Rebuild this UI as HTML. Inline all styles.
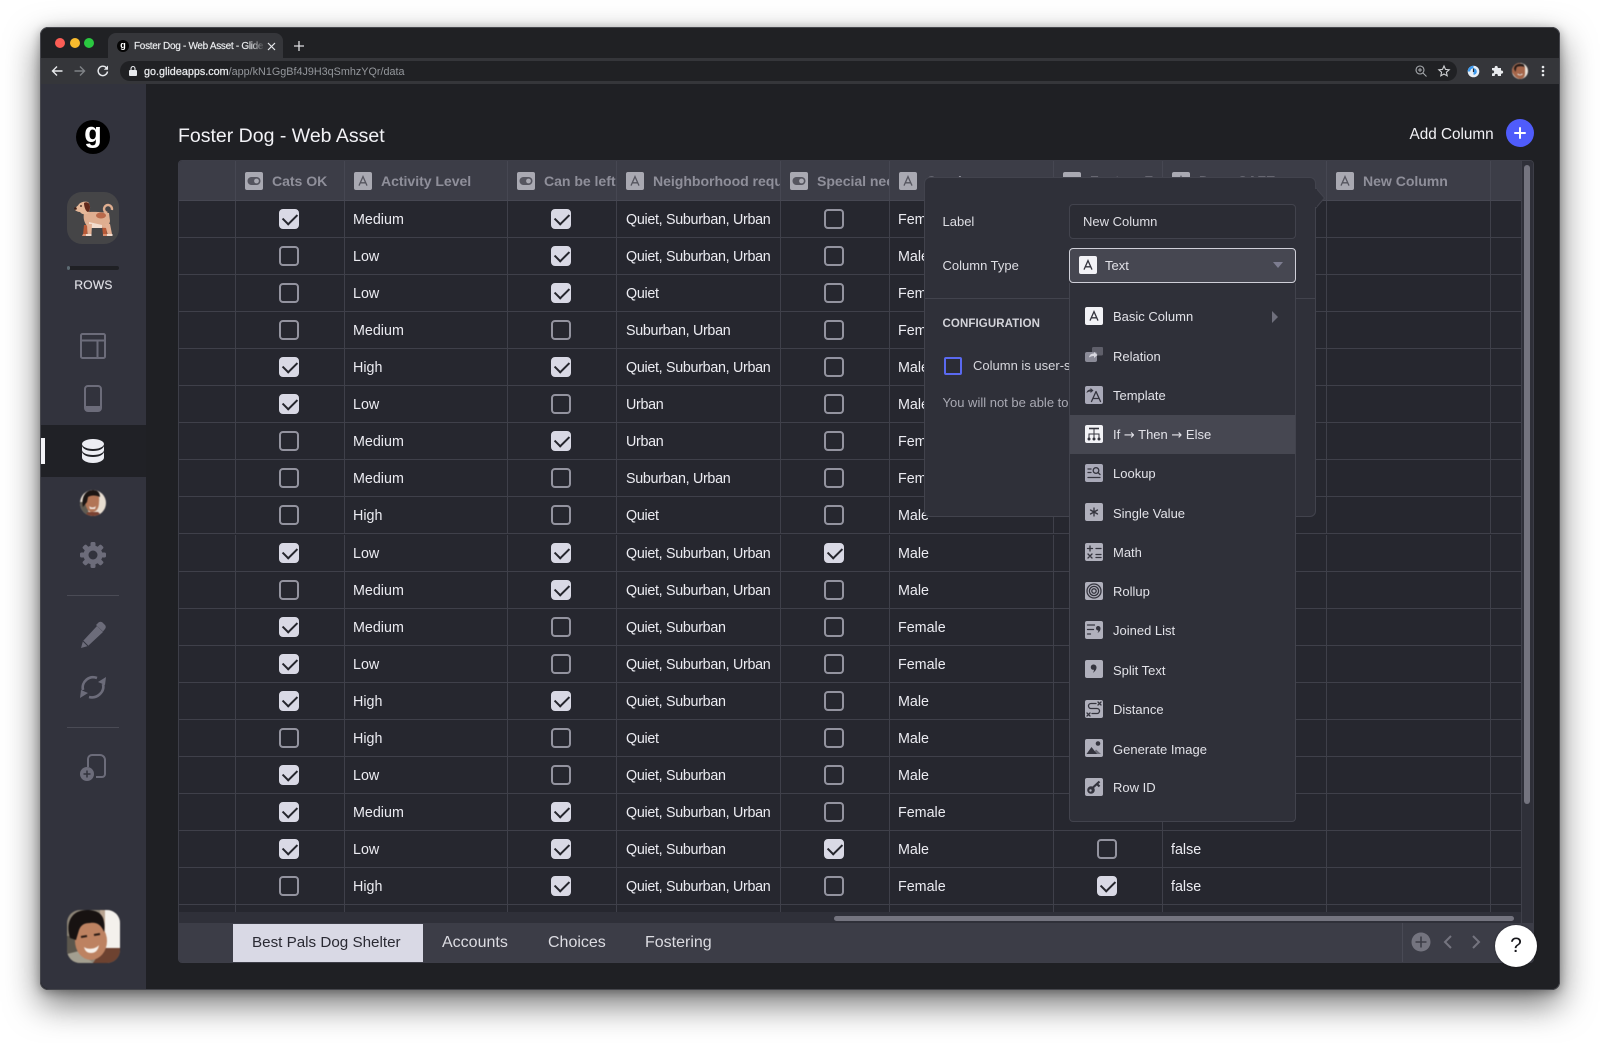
<!DOCTYPE html>
<html lang="en"><head><meta charset="utf-8"><title>Foster Dog - Web Asset</title>
<style>
*{box-sizing:border-box}
html,body{margin:0;padding:0;width:1600px;height:1043px;overflow:hidden;background:#fff;font-family:"Liberation Sans",sans-serif}
.a{position:absolute}
.t{position:absolute;white-space:nowrap;line-height:20px;height:20px}
#win{position:absolute;left:40px;top:27px;width:1520px;height:963px;background:#1f2024;border-radius:8px;box-shadow:0 14px 34px rgba(0,0,0,.55),0 2px 10px rgba(0,0,0,.3);}
#stage{position:absolute;left:0;top:0;width:1600px;height:1043px;overflow:hidden}
#clip{position:absolute;left:40px;top:27px;width:1520px;height:963px;border-radius:8px;overflow:hidden;border:1px solid #45464c}
#tbl{position:absolute;left:178px;top:160px;width:1356px;height:803px;border:1px solid #3d3e48;border-radius:4px;background:#26272f;overflow:hidden}
.r{position:absolute;left:0;width:1343px;height:37px;display:grid;grid-template-columns:57px 109px 163px 109px 164px 109px 164px 109px 164px 164px 31px;border-bottom:1px solid #3f404a;color:#ececf2;font-size:14.3px;line-height:38px}
.r span{border-right:1px solid #3f404a;padding-left:8px;white-space:nowrap;overflow:hidden;display:block;height:36px}
.r span:nth-child(5){letter-spacing:-.3px;padding-left:9px}
.r span.m{padding:8px 0 0 0;display:flex;justify-content:center}
.c{display:block;width:20px;height:20px;border:2px solid #93939f;border-radius:4px;position:relative;margin-right:3px}
.k{background:#d9d9e5;border-color:#d9d9e5}
.k:after{content:"";position:absolute;left:2px;top:2px;width:12px;height:7px;border-left:2px solid #24252c;border-bottom:2px solid #24252c;transform:rotate(-45deg)}
.h{position:absolute;left:0;top:0;width:1343px;height:40px;display:grid;grid-template-columns:57px 109px 163px 109px 164px 109px 164px 109px 164px 164px 31px;background:#3c3d47;border-bottom:1px solid #464752;color:#8f8f9a;font-size:14.1px;font-weight:bold;line-height:41px}
.h span{border-right:1px solid #464752;position:relative;overflow:hidden;display:block;height:39px;padding-left:36px;white-space:nowrap;letter-spacing:-.05px}
.h svg{position:absolute;left:9px;top:11px}
svg{display:block;overflow:visible}
.mi{position:absolute;left:1085px;width:18px;height:18px}
.ml{position:absolute;left:1113px;font-size:13px;color:#e2e2e8;white-space:nowrap;line-height:20px}
.g{fill:none;stroke:#34343e;stroke-width:1.3;stroke-linecap:round;stroke-linejoin:round}
.f{fill:#34343e}
.tb{position:absolute;top:933px;font-size:16px;line-height:20px;color:#dcdce2;white-space:nowrap}
</style></head><body>
<svg width="0" height="0" style="position:absolute">
<symbol id="iA" viewBox="0 0 18 18"><rect width="18" height="18" rx="2" fill="#a9a9b2"/><path d="M5 13.600 9 4.600l4 9M6.400 10.800h5.200" fill="none" stroke="#55555f" stroke-width="1.300"/></symbol>
<symbol id="iT" viewBox="0 0 18 18"><rect width="18" height="18" rx="2" fill="#a9a9b2"/><rect x="2.500" y="5" width="13" height="8" rx="4" fill="#55555f"/><circle cx="11.500" cy="9" r="2.400" fill="#a9a9b2"/></symbol>
<symbol id="iW" viewBox="0 0 18 18"><rect width="18" height="18" rx="2" fill="#f2f2f6"/><path d="M5 13.600 9 4.600l4 9M6.400 10.800h5.200" fill="none" stroke="#34343e" stroke-width="1.300"/></symbol>
</svg>
<div id="stage">
<div id="win"></div>
<div id="clip"></div>

<!-- chrome -->
<div class="a" style="left:41px;top:28px;width:1518px;height:31px;background:#202124;border-radius:8px 8px 0 0"></div>
<div class="a" style="left:41px;top:58px;width:1518px;height:26px;background:#35363a"></div>
<div class="a" style="left:55px;top:38px;width:10px;height:10px;border-radius:50%;background:#fb5d55"></div>
<div class="a" style="left:70px;top:38px;width:10px;height:10px;border-radius:50%;background:#f9bb2e"></div>
<div class="a" style="left:84px;top:38px;width:10px;height:10px;border-radius:50%;background:#2ac840"></div>
<div class="a" style="left:108px;top:33px;width:175px;height:26px;background:#35363a;border-radius:8px 8px 0 0"></div>
<div class="a" style="left:117px;top:40px;width:12px;height:12px;border-radius:50%;background:#050505;color:#fff;font-size:9px;font-weight:bold;line-height:10px;text-align:center">g</div>
<div class="t" style="left:134px;top:36.500px;width:130px;overflow:hidden;font-size:10px;letter-spacing:-.3px;color:#eceef0;-webkit-text-stroke:.15px #eceef0">Foster Dog - Web Asset - Glide</div>
<div class="a" style="left:250px;top:36px;width:15px;height:20px;background:linear-gradient(90deg,rgba(53,54,58,0),#35363a)"></div>
<svg class="a" style="left:267px;top:41.500px" width="9" height="9"><path d="M1 1l7 7M8 1l-7 7" stroke="#e8eaed" stroke-width="1.200"/></svg>
<svg class="a" style="left:294px;top:41px" width="10" height="10"><path d="M5 0v10M0 5h10" stroke="#dcdde0" stroke-width="1.300"/></svg>
<svg class="a" style="left:51px;top:65px" width="12" height="12"><path d="M11.500 6H1.500M6 1.500 1.500 6 6 10.500" fill="none" stroke="#e8eaed" stroke-width="1.400"/></svg>
<svg class="a" style="left:74px;top:65px" width="12" height="12"><path d="M.5 6h10M6 1.500 10.500 6 6 10.500" fill="none" stroke="#7f8286" stroke-width="1.400"/></svg>
<svg class="a" style="left:97px;top:65px" width="12" height="12"><path d="M10.500 6.500A4.700 4.700 0 1 1 9.200 2.600" fill="none" stroke="#e8eaed" stroke-width="1.400"/><path d="M11 .5v4.200H6.800z" fill="#e8eaed"/></svg>
<div class="a" style="left:120px;top:61px;width:1337px;height:20px;background:#202124;border-radius:10px"></div>
<svg class="a" style="left:129px;top:66px" width="8" height="10"><rect y="4" width="8" height="6" rx="1" fill="#e8eaed"/><path d="M2 4V2.500a2 2 0 0 1 4 0V4" fill="none" stroke="#e8eaed" stroke-width="1.100"/></svg>
<div class="t" style="left:144px;top:62px;font-size:10.800px;color:#e8eaed"><b style="font-weight:normal;-webkit-text-stroke:.25px #e8eaed">go.glideapps.com</b><span style="color:#94979c">/app/kN1GgBf4J9H3qSmhzYQr/data</span></div>
<svg class="a" style="left:1415px;top:65px" width="12" height="12"><circle cx="5" cy="5" r="4" fill="none" stroke="#a8abaf" stroke-width="1.100"/><path d="M8 8l3.500 3.500M3 5h4M5 3v4" stroke="#a8abaf" stroke-width="1"/></svg>
<svg class="a" style="left:1438px;top:65px" width="12" height="12"><path d="M6 1l1.500 3.400 3.700.4-2.800 2.400.8 3.600L6 9l-3.200 1.800.8-3.600L.8 4.800l3.700-.4z" fill="none" stroke="#cfd1d4" stroke-width="1.100"/></svg>
<svg class="a" style="left:1467px;top:65px" width="13" height="13"><circle cx="6.500" cy="6.500" r="5.800" fill="#e8eef5"/><path d="M6.500.7a5.800 5.800 0 0 0-5.800 5.800h2.500a3.300 3.300 0 1 1 3.300 3.300z" fill="#3d9bf0"/><path d="M6.500 3.500v3.500" stroke="#20242a" stroke-width="1.200"/></svg>
<svg class="a" style="left:1491px;top:65px" width="12" height="12"><path d="M1 3h2.700a1.600 1.600 0 1 1 3 0H10v2.600a1.600 1.600 0 1 1 0 3V11H6.800a1.600 1.600 0 1 0-3 0H1V8.300a1.600 1.600 0 1 0 0-3z" fill="#e8eaed"/></svg>
<svg class="a" style="left:1512px;top:63px;filter:blur(.4px)" width="16" height="16"><circle cx="8" cy="8" r="8" fill="#e9e2da"/><path d="M8 0a8 8 0 0 0-7.800 9.500C2 12 3 15 8 16c4-.4 5-3 5-6V4z" fill="#a5664a"/><path d="M2 6C2 2 6 .5 10 .8c2 .4 2.500 2 2.500 3.200-3-1-7-1-8 .5L3.500 9z" fill="#241a17"/><path d="M5.500 11c1.500 1 3.500 1 5 0" stroke="#f4ece6" stroke-width="1"/></svg>
<svg class="a" style="left:1541px;top:65px" width="4" height="12"><circle cx="2" cy="2" r="1.300" fill="#e8eaed"/><circle cx="2" cy="6" r="1.300" fill="#e8eaed"/><circle cx="2" cy="10" r="1.300" fill="#e8eaed"/></svg>

<!-- sidebar -->
<div class="a" style="left:41px;top:84px;width:105px;height:905px;background:#32333d;border-radius:0 0 0 8px"></div>
<div class="a" style="left:76px;top:120px;width:34px;height:34px;border-radius:50%;background:#000;color:#fff;font-size:29px;font-weight:bold;text-align:center;line-height:27px">g</div>
<div class="a" style="left:67px;top:192px;width:52px;height:52px;border-radius:15px;background:#454547"></div>
<svg class="a" style="left:72px;top:197px" width="42" height="42" viewBox="0 0 42 42">
<circle cx="36" cy="12" r="4" fill="none" stroke="#dfae90" stroke-width="2.400" stroke-dasharray="19 7" transform="rotate(100 36 12)"/>
<path d="M12 28h4l-1 10h-4z" fill="#b85a38"/>
<path d="M30 28h4l1 10h-4z" fill="#b85a38"/>
<path d="M11 37h4v2h-5zM31 37h4v2h-4z" fill="#d98f70"/>
<path d="M12 16C18 14 30 15 37 16l1 8c-.5 3-2 5-3 7L16 30c-4-4-5-9-4-14z" fill="#dfae90"/>
<ellipse cx="29" cy="18.500" rx="5" ry="3" fill="#b9694a"/>
<path d="M17 25l13 3v3H17z" fill="#f3dccd"/>
<path d="M15 27h5l-.5 10h-4z" fill="#e3b093"/>
<path d="M33 27h5l2 10h-4.500z" fill="#e3b093"/>
<path d="M14 37h5.500v2H14zM35 37h5.500v2H35z" fill="#f3dccd"/>
<path d="M3 11c1-1 3-2 4-4 2-2 6-3 9-2 2 2 3 6 1 10-2 3-7 3-9 0-2 0-4-1-5-2-.5-.7-.5-1.300 0-2z" fill="#e6b899"/>
<path d="M12 6c3-2 6 0 6 4 0 3-1 5-2 5-2 0-4-5-4-9z" fill="#61291c"/>
<circle cx="3.500" cy="11.500" r="1.300" fill="#3a1c14"/><circle cx="9" cy="9" r=".9" fill="#2a1410"/>
</svg>
<div class="a" style="left:67px;top:266px;width:52px;height:4px;border-radius:2px;background:#1f2024"></div>
<div class="a" style="left:67px;top:266px;width:3px;height:4px;border-radius:2px;background:#5c6a72"></div>
<div class="t" style="left:41px;top:275px;width:105px;text-align:center;font-size:12px;color:#dedee4;letter-spacing:.2px;-webkit-text-stroke:.2px #dedee4">ROWS</div>
<svg class="a" style="left:80px;top:333px" width="26" height="26"><rect x="1" y="1" width="24" height="24" rx="1.500" fill="none" stroke="#6c6c7a" stroke-width="2"/><path d="M1 7.500h24M17.500 7.500V25" stroke="#6c6c7a" stroke-width="2"/></svg>
<svg class="a" style="left:84px;top:385px" width="18" height="27"><rect x="1" y="1" width="16" height="25" rx="3" fill="none" stroke="#6c6c7a" stroke-width="2"/><path d="M1 21h16v2.500a2.500 2.500 0 0 1-2.500 2.500h-11A2.500 2.500 0 0 1 1 23.500z" fill="#6c6c7a"/></svg>
<div class="a" style="left:41px;top:425px;width:105px;height:52px;background:#202126"></div>
<div class="a" style="left:41px;top:438px;width:4px;height:26px;background:#f4f4f8"></div>
<svg class="a" style="left:82px;top:439px" width="22" height="24"><ellipse cx="11" cy="5" rx="11" ry="5" fill="#ecedf3"/><path d="M0 7c1 3 5 5 11 5s10-2 11-5v4c0 3-5 5-11 5S0 14 0 11z" fill="#ecedf3"/><path d="M0 13c1 3 5 5 11 5s10-2 11-5v5.500c0 3-5 5.500-11 5.500S0 21.500 0 18.500z" fill="#ecedf3"/></svg>
<svg class="a" style="left:80px;top:490px;filter:blur(.4px)" width="26" height="26" viewBox="0 0 26 26"><defs><clipPath id="av1"><circle cx="13" cy="13" r="13"/></clipPath></defs><g clip-path="url(#av1)"><rect width="26" height="26" fill="#e8ded2"/><path d="M0 12h7l2 14H0z" fill="#5f5a50"/><path d="M5 10c0-6 4-8 8-8s7 3 6 10c0 7-3 10-7 10s-7-5-7-12z" fill="#b27556"/><path d="M3 17C1 8 5 0 13 0c5 0 7 3 7 7-4-2-9-2-12 0L7 12z" fill="#1b1513"/><path d="M9 16c2 2 5 2 7 0l-1 3h-5z" fill="#f5ede8"/><path d="M4 26l4-4h10l4 4z" fill="#7a4232"/></g></svg>
<svg class="a" style="left:80px;top:542px" width="26" height="26" viewBox="0 0 26 26"><g fill="#6c6c7a"><rect x="10.500" y="0" width="5" height="26" rx="1.500"/><rect x="10.500" y="0" width="5" height="26" rx="1.500" transform="rotate(45 13 13)"/><rect x="10.500" y="0" width="5" height="26" rx="1.500" transform="rotate(90 13 13)"/><rect x="10.500" y="0" width="5" height="26" rx="1.500" transform="rotate(135 13 13)"/><circle cx="13" cy="13" r="9.500"/></g><circle cx="13" cy="13" r="4.500" fill="#32333d"/></svg>
<div class="a" style="left:67px;top:595px;width:52px;height:1px;background:#4a4b55"></div>
<svg class="a" style="left:80px;top:622px" width="26" height="27" viewBox="0 0 26 27"><path d="M1 26l2-7L17 4l6 6L8 24z" fill="#6c6c7a"/><path d="M16 3l2.500-2.500a3 3 0 0 1 4 0l2.500 2.500a3 3 0 0 1 0 4L23 9.500z" fill="#6c6c7a"/><path d="M3 19l5 5" stroke="#32333d" stroke-width="1"/></svg>
<svg class="a" style="left:80px;top:675px" width="26" height="25" viewBox="0 0 26 25"><path d="M3 15C1 7 9 0 17 3M23 9c2 8-6 15-14 13" fill="none" stroke="#6c6c7a" stroke-width="2.600"/><path d="M26 2l-1 8-7-3zM0 23l1-8 7 3z" fill="#6c6c7a"/></svg>
<div class="a" style="left:67px;top:727px;width:52px;height:1px;background:#4a4b55"></div>
<svg class="a" style="left:80px;top:754px" width="27" height="27" viewBox="0 0 27 27"><path d="M8 13V5a4 4 0 0 1 4-4h8a5 5 0 0 1 5 5v14a3 3 0 0 1-3 3h-6" fill="none" stroke="#6c6c7a" stroke-width="2"/><circle cx="7" cy="20" r="7" fill="#6c6c7a"/><path d="M7 16.500v7M3.500 20h7" stroke="#32333d" stroke-width="1.500"/></svg>
<svg class="a" style="left:67px;top:910px;filter:blur(.6px)" width="53" height="53" viewBox="0 0 53 53"><defs><clipPath id="av2"><rect width="53" height="53" rx="13"/></clipPath></defs><g clip-path="url(#av2)"><rect width="53" height="53" fill="#8d8577"/><rect x="36" y="0" width="17" height="38" fill="#f4f1ec"/><rect x="33" y="0" width="5" height="40" fill="#b8a390"/><path d="M0 26h10l8 27H0z" fill="#5c574d"/><path d="M0 44l12-3 14 12H0z" fill="#a39f90"/><path d="M36 38h17v15H26z" fill="#6d4230"/><ellipse cx="24" cy="31" rx="16" ry="19" fill="#bd8261"/><path d="M3 28C-2 12 5 0 20 0c9 0 16 3 17 12 1 5 0 10 0 10-3-8-8-10-14-9-6 0-9 2-11 7L9 30z" fill="#171211"/><path d="M14 27l6-1M27 25l6-1" stroke="#2a1a14" stroke-width="2"/><path d="M17 37c4 3 12 2 15-2-1 6-4 8-8 8s-6-2-7-6z" fill="#f7f0ea"/></g></svg>

<!-- title -->
<div class="t" style="left:178px;top:124px;font-size:19.500px;color:#f2f2f6;line-height:24px;height:24px">Foster Dog - Web Asset</div>
<div class="t" style="left:1409.500px;top:124.500px;font-size:15.300px;color:#f2f2f6">Add Column</div>
<div class="a" style="left:1506px;top:119px;width:28px;height:28px;border-radius:50%;background:#4f5cfb"></div>
<svg class="a" style="left:1514px;top:127px" width="12" height="12"><path d="M6 1v10M1 6h10" stroke="#fff" stroke-width="2" stroke-linecap="round"/></svg>

<!-- table -->
<div id="tbl">
<div class="h">
<span></span>
<span><svg width="18" height="18"><use href="#iT"/></svg>Cats OK</span>
<span><svg width="18" height="18"><use href="#iA"/></svg>Activity Level</span>
<span><svg width="18" height="18"><use href="#iT"/></svg>Can be left alone</span>
<span><svg width="18" height="18"><use href="#iA"/></svg>Neighborhood required</span>
<span><svg width="18" height="18"><use href="#iT"/></svg>Special needs</span>
<span><svg width="18" height="18"><use href="#iA"/></svg>Gender</span>
<span><svg width="18" height="18"><use href="#iT"/></svg>Fosters F</span>
<span><svg width="18" height="18"><use href="#iA"/></svg>Dogs SAFE</span>
<span><svg width="18" height="18"><use href="#iA"/></svg>New Column</span>
<span></span>
</div>
<div class="r" style="top:40px"><span></span><span class="m"><i class="c k"></i></span><span>Medium</span><span class="m"><i class="c k"></i></span><span>Quiet, Suburban, Urban</span><span class="m"><i class="c"></i></span><span>Female</span><span></span><span></span><span></span><span></span></div>
<div class="r" style="top:77px"><span></span><span class="m"><i class="c"></i></span><span>Low</span><span class="m"><i class="c k"></i></span><span>Quiet, Suburban, Urban</span><span class="m"><i class="c"></i></span><span>Male</span><span></span><span></span><span></span><span></span></div>
<div class="r" style="top:114px"><span></span><span class="m"><i class="c"></i></span><span>Low</span><span class="m"><i class="c k"></i></span><span>Quiet</span><span class="m"><i class="c"></i></span><span>Female</span><span></span><span></span><span></span><span></span></div>
<div class="r" style="top:151px"><span></span><span class="m"><i class="c"></i></span><span>Medium</span><span class="m"><i class="c"></i></span><span>Suburban, Urban</span><span class="m"><i class="c"></i></span><span>Female</span><span></span><span></span><span></span><span></span></div>
<div class="r" style="top:188px"><span></span><span class="m"><i class="c k"></i></span><span>High</span><span class="m"><i class="c k"></i></span><span>Quiet, Suburban, Urban</span><span class="m"><i class="c"></i></span><span>Male</span><span></span><span></span><span></span><span></span></div>
<div class="r" style="top:225px"><span></span><span class="m"><i class="c k"></i></span><span>Low</span><span class="m"><i class="c"></i></span><span>Urban</span><span class="m"><i class="c"></i></span><span>Male</span><span></span><span></span><span></span><span></span></div>
<div class="r" style="top:262px"><span></span><span class="m"><i class="c"></i></span><span>Medium</span><span class="m"><i class="c k"></i></span><span>Urban</span><span class="m"><i class="c"></i></span><span>Female</span><span></span><span></span><span></span><span></span></div>
<div class="r" style="top:299px"><span></span><span class="m"><i class="c"></i></span><span>Medium</span><span class="m"><i class="c"></i></span><span>Suburban, Urban</span><span class="m"><i class="c"></i></span><span>Female</span><span></span><span></span><span></span><span></span></div>
<div class="r" style="top:336px"><span></span><span class="m"><i class="c"></i></span><span>High</span><span class="m"><i class="c"></i></span><span>Quiet</span><span class="m"><i class="c"></i></span><span>Male</span><span></span><span></span><span></span><span></span></div>
<div class="r" style="top:374px"><span></span><span class="m"><i class="c k"></i></span><span>Low</span><span class="m"><i class="c k"></i></span><span>Quiet, Suburban, Urban</span><span class="m"><i class="c k"></i></span><span>Male</span><span></span><span></span><span></span><span></span></div>
<div class="r" style="top:411px"><span></span><span class="m"><i class="c"></i></span><span>Medium</span><span class="m"><i class="c k"></i></span><span>Quiet, Suburban, Urban</span><span class="m"><i class="c"></i></span><span>Male</span><span></span><span></span><span></span><span></span></div>
<div class="r" style="top:448px"><span></span><span class="m"><i class="c k"></i></span><span>Medium</span><span class="m"><i class="c"></i></span><span>Quiet, Suburban</span><span class="m"><i class="c"></i></span><span>Female</span><span></span><span></span><span></span><span></span></div>
<div class="r" style="top:485px"><span></span><span class="m"><i class="c k"></i></span><span>Low</span><span class="m"><i class="c"></i></span><span>Quiet, Suburban, Urban</span><span class="m"><i class="c"></i></span><span>Female</span><span></span><span></span><span></span><span></span></div>
<div class="r" style="top:522px"><span></span><span class="m"><i class="c k"></i></span><span>High</span><span class="m"><i class="c k"></i></span><span>Quiet, Suburban</span><span class="m"><i class="c"></i></span><span>Male</span><span></span><span></span><span></span><span></span></div>
<div class="r" style="top:559px"><span></span><span class="m"><i class="c"></i></span><span>High</span><span class="m"><i class="c"></i></span><span>Quiet</span><span class="m"><i class="c"></i></span><span>Male</span><span></span><span></span><span></span><span></span></div>
<div class="r" style="top:596px"><span></span><span class="m"><i class="c k"></i></span><span>Low</span><span class="m"><i class="c"></i></span><span>Quiet, Suburban</span><span class="m"><i class="c"></i></span><span>Male</span><span></span><span></span><span></span><span></span></div>
<div class="r" style="top:633px"><span></span><span class="m"><i class="c k"></i></span><span>Medium</span><span class="m"><i class="c k"></i></span><span>Quiet, Suburban, Urban</span><span class="m"><i class="c"></i></span><span>Female</span><span></span><span></span><span></span><span></span></div>
<div class="r" style="top:670px"><span></span><span class="m"><i class="c k"></i></span><span>Low</span><span class="m"><i class="c k"></i></span><span>Quiet, Suburban</span><span class="m"><i class="c k"></i></span><span>Male</span><span class="m"><i class="c"></i></span><span>false</span><span></span><span></span><span></span></div>
<div class="r" style="top:707px"><span></span><span class="m"><i class="c"></i></span><span>High</span><span class="m"><i class="c k"></i></span><span>Quiet, Suburban, Urban</span><span class="m"><i class="c"></i></span><span>Female</span><span class="m"><i class="c k"></i></span><span>false</span><span></span><span></span><span></span></div>
<div class="r" style="top:744px;height:8px;overflow:hidden"><span></span><span></span><span></span><span></span><span></span><span></span><span></span><span></span><span></span><span></span><span></span></div>
<!-- scroll band -->
<div class="a" style="left:0;top:751px;width:1354px;height:11px;background:#2f3039"></div>
<div class="a" style="left:1342px;top:0;width:12px;height:762px;background:#2f3039;border-left:1px solid #3f404a"></div>
<div class="a" style="left:1345px;top:4px;width:6px;height:639px;border-radius:3px;background:#74747f"></div>
<div class="a" style="left:655px;top:755px;width:680px;height:5px;border-radius:3px;background:#74747f"></div>
<!-- tab bar -->
<div class="a" style="left:0;top:762px;width:1354px;height:40px;background:#3c3d47"></div>
<div class="a" style="left:1223px;top:762px;width:1px;height:40px;background:#494a55"></div>
</div>
<div class="a" style="left:233px;top:924px;width:190px;height:38px;background:#d9d9e5"></div>
<div class="tb" style="left:252px;color:#2a2a33;font-size:15.200px">Best Pals Dog Shelter</div>
<div class="tb" style="left:442px">Accounts</div>
<div class="tb" style="left:548px">Choices</div>
<div class="tb" style="left:645px">Fostering</div>
<svg class="a" style="left:1411px;top:932px" width="20" height="20"><circle cx="10" cy="10" r="9.500" fill="#74747f"/><path d="M10 4.500v11M4.500 10h11" stroke="#3c3d47" stroke-width="1.600"/></svg>
<svg class="a" style="left:1443px;top:935px" width="10" height="14"><path d="M8 1 2 7l6 6" fill="none" stroke="#74747f" stroke-width="2"/></svg>
<svg class="a" style="left:1471px;top:935px" width="10" height="14"><path d="M2 1l6 6-6 6" fill="none" stroke="#74747f" stroke-width="2"/></svg>
<div class="a" style="left:1495px;top:925px;width:42px;height:42px;border-radius:50%;background:#fff;box-shadow:0 0 2px rgba(0,0,0,.4);color:#15151a;font-size:21px;text-align:center;line-height:42px">?</div>

<!-- popover -->
<svg class="a" style="left:1310px;top:186px" width="16" height="24"><path d="M5 1l9.500 11L5 23z" fill="#2f3039" stroke="#42434d"/></svg>
<div class="a" style="left:924px;top:177px;width:392px;height:340px;background:#2f3039;border:1px solid #42434d;border-radius:6px"></div>
<div class="a" style="left:1314px;top:189px;width:3px;height:18px;background:#2f3039"></div>
<div class="t" style="left:942.500px;top:212px;font-size:13px;color:#dedee4">Label</div>
<div class="a" style="left:1069px;top:204px;width:227px;height:35px;border:1px solid #42434d;border-radius:4px;background:#2b2c34"></div>
<div class="t" style="left:1083px;top:212px;font-size:13px;color:#dedee4">New Column</div>
<div class="t" style="left:942.500px;top:255.500px;font-size:13px;color:#dedee4">Column Type</div>
<div class="a" style="left:1069px;top:248px;width:227px;height:35px;border:1px solid #cfcfd8;border-radius:4px;background:#464751"></div>
<svg class="a" style="left:1079px;top:256px" width="18" height="18"><use href="#iW"/></svg>
<div class="t" style="left:1105px;top:255.500px;font-size:13px;color:#e2e2e8">Text</div>
<svg class="a" style="left:1273px;top:262px" width="10" height="6"><path d="M0 0h10L5 6z" fill="#7d7d90"/></svg>
<div class="a" style="left:925px;top:298px;width:390px;height:1px;background:#42434d"></div>
<div class="t" style="left:942.500px;top:314px;font-size:11.500px;font-weight:bold;color:#d4d4da;letter-spacing:.1px">CONFIGURATION</div>
<div class="a" style="left:944px;top:357px;width:18px;height:18px;border:2px solid #5a69f0;border-radius:2px;background:#2b2c34"></div>
<div class="t" style="left:973px;top:356px;width:96px;overflow:hidden;font-size:13px;color:#d6d6dc">Column is user-specific</div>
<div class="t" style="left:942.500px;top:393px;width:126px;overflow:hidden;font-size:13px;color:#a9a9b3">You will not be able to change this</div>

<!-- dropdown -->
<div class="a" style="left:1069px;top:283px;width:227px;height:539px;background:#2f3039;border:1px solid #42434d;border-top:none;border-radius:0 0 4px 4px"></div>
<div class="a" style="left:1070px;top:415px;width:225px;height:39px;background:#464751"></div>

<svg class="mi" style="top:307px" viewBox="0 0 18 18"><use href="#iW"/></svg>
<div class="ml" style="top:307px">Basic Column</div>
<svg class="a" style="left:1272px;top:311px" width="6" height="12"><path d="M0 0l6 6-6 6z" fill="#6f6f7c"/></svg>

<svg class="mi" style="top:347px" viewBox="0 0 18 18"><path d="M7 1.500A1.500 1.500 0 0 1 8.500 0H17a1 1 0 0 1 1 1v6a1.500 1.500 0 0 1-1.500 1.500H7z" fill="#5f5f6a"/><rect y="5" width="12" height="10" rx="2" fill="#8b8b98"/><path d="M4 10.500c.5-3 2.500-4 5-4V5l3.500 3L9 11V9c-2 0-3.500.5-5 1.500z" fill="#d8d8e0"/></svg>
<div class="ml" style="top:347px">Relation</div>

<svg class="mi" style="top:386px" viewBox="0 0 18 18"><rect width="18" height="18" rx="2" fill="#a9a9b8"/><path d="M6.500 15.500 11 5.500l4.500 10M8 12.500h6" class="g"/><path d="M1.500 7c.5-2.500 2-3.500 4-3.500V2L8.500 4.500 5.500 7V5.500c-1.500 0-2.800.5-4 1.500z" class="f"/></svg>
<div class="ml" style="top:386px">Template</div>

<svg class="mi" style="top:425px" viewBox="0 0 18 18"><rect width="18" height="18" rx="2" fill="#f2f2f6"/><path d="M4 3.500h10" stroke="#34343e" stroke-width="1.600"/><path d="M9 3.500V13M4 13V9h10v4" fill="none" stroke="#34343e" stroke-width="1"/><circle cx="4" cy="14" r="1.500" class="f"/><circle cx="9" cy="14" r="1.500" class="f"/><circle cx="14" cy="14" r="1.500" class="f"/></svg>
<div class="ml" style="top:425px">If <span style="font-family:'DejaVu Sans',sans-serif;font-size:13px">→</span> Then <span style="font-family:'DejaVu Sans',sans-serif;font-size:13px">→</span> Else</div>

<svg class="mi" style="top:464px" viewBox="0 0 18 18"><rect width="18" height="18" rx="2" fill="#a9a9b8"/><path d="M3 5h3M3 8.500h3M3 13.500h12" class="g"/><circle cx="11" cy="6.500" r="2.800" class="g"/><path d="M13 8.500l2 2" class="g"/></svg>
<div class="ml" style="top:464px">Lookup</div>

<svg class="mi" style="top:503px" viewBox="0 0 18 18"><rect width="18" height="18" rx="2" fill="#b0b0bc"/><path d="M9 5v8M5.500 7l7 4M12.500 7l-7 4" class="g" stroke-width="1.500"/></svg>
<div class="ml" style="top:503.500px">Single Value</div>

<svg class="mi" style="top:543px" viewBox="0 0 18 18"><rect width="18" height="18" rx="2" fill="#b0b0bc"/><path d="M5 3v5M2.500 5.500h5M11 5.500h5M3 11l4 4M7 11l-4 4M11 11.500h5M11 14.500h5" class="g" stroke-width="1.700"/></svg>
<div class="ml" style="top:543px">Math</div>

<svg class="mi" style="top:582px" viewBox="0 0 18 18"><rect width="18" height="18" rx="2" fill="#b0b0bc"/><circle cx="9" cy="9" r="7" class="g" stroke-width=".8"/><circle cx="9" cy="9" r="4.600" class="g" stroke-width=".8"/><circle cx="9" cy="9" r="2.200" class="g" stroke-width=".8"/></svg>
<div class="ml" style="top:582px">Rollup</div>

<svg class="mi" style="top:621px" viewBox="0 0 18 18"><rect width="18" height="18" rx="2" fill="#b0b0bc"/><path d="M2.500 4h7M2.500 8.500h6M2.500 13h3" class="g" stroke-width="1.600"/><path d="M13 5c1.800 0 2.700 1.300 2.500 3-.2 1.700-1.400 3.200-3 4 .6-1 1-1.800.8-2.500C12 9.600 11 8.600 11 7.300 11 6 11.900 5 13 5z" class="f"/></svg>
<div class="ml" style="top:621px">Joined List</div>

<svg class="mi" style="top:660px" viewBox="0 0 18 18"><rect width="18" height="18" rx="2" fill="#b0b0bc"/><path d="M8.500 4.500c2 0 3.200 1.500 3 3.400-.2 2-1.700 3.800-3.700 5 .8-1.200 1.300-2.400 1-3.200-2 .3-3-1-3-2.500 0-1.500 1.200-2.700 2.700-2.700z" class="f"/></svg>
<div class="ml" style="top:660.500px">Split Text</div>

<svg class="mi" style="top:700px" viewBox="0 0 18 18"><rect width="18" height="18" rx="2" fill="#b0b0bc"/><path d="M11 3.500H6a2.500 2.500 0 0 0 0 5h6a2.500 2.500 0 0 1 0 5H7" class="g" stroke-width="1.500"/><path d="M13 2l3 3M16 2l-3 3M2 13l3 3M5 13l-3 3" class="g" stroke-width="1"/></svg>
<div class="ml" style="top:700px">Distance</div>

<svg class="mi" style="top:739px" viewBox="0 0 18 18"><rect width="18" height="18" rx="2" fill="#b0b0bc"/><path d="M8 15l3-4.500 5 4.500z" fill="#6a6a76"/><path d="M1.500 15L6.500 8l5.500 7z" class="f"/><circle cx="13" cy="4.500" r="2.300" class="f"/></svg>
<div class="ml" style="top:739.500px">Generate Image</div>

<svg class="mi" style="top:778px" viewBox="0 0 18 18"><rect width="18" height="18" rx="2" fill="#b0b0bc"/><circle cx="6" cy="12" r="3.800" class="f"/><path d="M8 9.500l6.500-6M12 6l2.500 2.500" fill="none" stroke="#34343e" stroke-width="2.200"/><circle cx="5.500" cy="12.500" r="1.200" fill="#b0b0bc"/></svg>
<div class="ml" style="top:778px">Row ID</div>
</div>
</body></html>
